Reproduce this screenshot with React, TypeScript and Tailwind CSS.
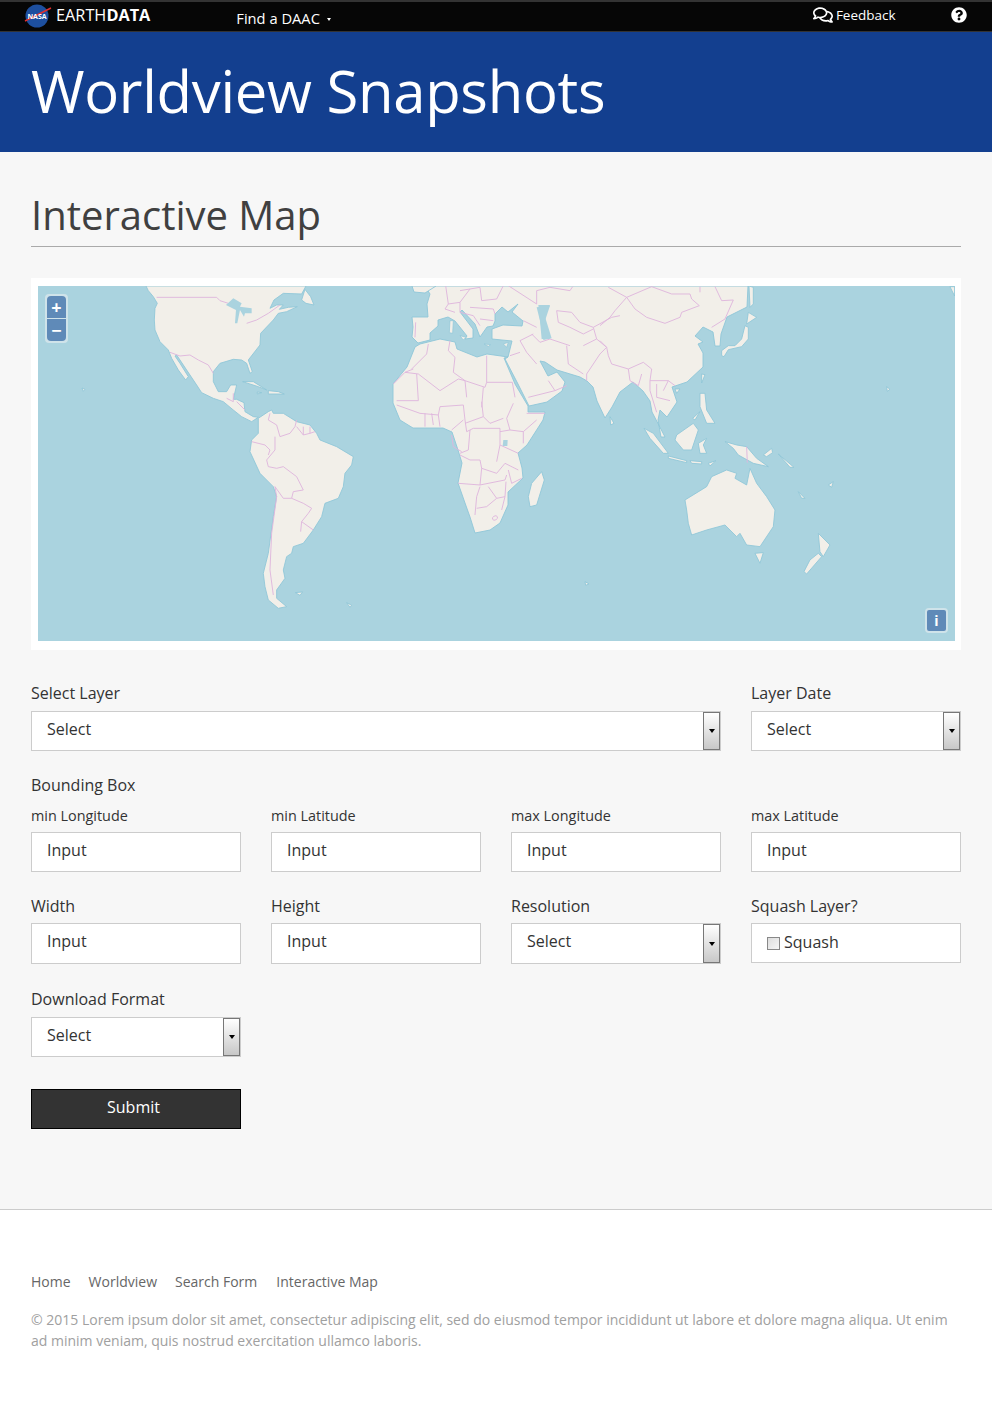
// App.tsx
import React from "react";
import { FaQuestionCircle, FaRegComments } from "react-icons/fa";

const LAND = "#f2efe9";
const COAST = "#8ec6d8";
const BORDER = "#dfb6dd";
const WATER = "#aad3df";

// page coordinates
const eurasia =
  "M425,286 430,294 427,304 428,317 412,317 413,327 412,337 418,343 430,340 430,333 438,326 438,320 448,317 455,321 467,336 465,339 473,338 473,329 460,312 462,310 475,324 480,337 487,327 493,326 495,321 495,314 502,307 508,312 518,304 512,312 523,321 522,326 503,325 492,329 492,339 512,341 508,357 505,359 518,384 529,406 547,402 562,391 565,382 557,372 548,376 540,361 545,362 557,370 580,377 587,381 593,387 597,401 605,418 612,407 620,392 633,382 643,391 650,401 652,412 665,437 661,437 658,420 660,410 667,417 677,402 672,387 687,382 703,367 703,353 698,344 703,342 695,336 703,327 713,332 715,346 720,346 721,334 727,317 747,307 748,286Z";
const africa =
  "M420,344 440,339 455,342 457,349 477,357 487,354 508,357 504,358 515,384 528,406 528,412 545,412 543,420 527,445 518,453 522,468 523,478 508,492 508,505 500,523 490,530 475,533 470,517 465,503 458,483 462,463 458,450 452,432 443,428 413,428 400,420 393,403 393,384 407,367 415,347Z";

const z3Land = [
  "378,48 385,62 400,80 412,100 405,115 403,150 405,180 420,215 445,240 455,265 475,300 497,330 505,320 480,280 465,258 470,255 500,300 530,345 545,368 580,385 610,395 640,420 665,440 695,455 715,442 700,440 675,425 672,398 650,388 640,388 650,345 632,345 620,365 595,365 580,335 580,305 600,280 640,268 665,270 680,280 690,310 697,305 685,270 720,225 722,190 760,150 775,130 800,125 832,110 805,112 778,118 790,105 770,105 750,115 762,90 790,70 845,72 858,48",
  "855,58 872,80 882,105 858,100 845,90",
  "715,445 745,425 755,420 760,430 790,430 830,455 870,465 890,490 900,510 950,530 1000,560 995,585 975,610 970,650 955,685 915,700 905,740 880,780 850,820 820,830 815,850 800,860 790,900 795,925 770,960 770,985 800,1010 775,1015 745,990 735,950 730,910 745,850 760,740 770,680 760,650 720,610 690,545 695,510 715,490",
  "668,335 700,335 740,360 715,350",
  "745,362 775,365 793,372 745,372",
  "712,366 725,368 712,372",
  "826,968 848,966 840,976",
  "980,998 995,1006 990,1012",
  "186,354 195,358 190,364",
];

const z3Borders = [
  "M410,82 L590,82 600,92 625,100",
  "M680,160 710,150 745,130 780,105",
  "M450,247 480,258 510,255 535,270 565,285 580,310",
  "M620,385 640,395 640,370",
  "M650,395 675,420",
  "M750,430 745,450 770,465 780,500 810,490 825,470 830,450",
  "M830,470 850,495 870,490 885,485",
  "M850,470 850,495 M870,470 870,490",
  "M695,515 735,525 750,540 745,555",
  "M765,500 765,540 740,570 745,590 770,595",
  "M770,595 790,590 830,620 850,660 820,665 815,685 850,700 875,715 865,730 845,755 842,785",
  "M765,650 770,680 755,790 750,900 760,975",
  "M765,650 790,685 815,685",
  "M845,755 880,780",
];

const z4Land = [
  "630,370 645,370 650,420 675,460 650,460 630,410",
  "360,440 372,460 362,465",
  "462,475 490,490 535,550 520,550 480,505",
  "535,558 590,572 590,578 535,565",
  "600,572 635,575 635,582 605,580",
  "655,580 678,572 660,588",
  "610,460 625,480 605,540 580,540 555,510 560,495",
  "625,520 650,505 640,525 650,550 630,550",
  "705,515 740,525 770,530 800,565 835,590 790,580 745,555 730,535",
  "820,555 845,535 848,548 830,560",
  "865,552 912,592 900,592",
  "585,690 650,650 665,620 710,600 740,610 735,625 770,645 780,595 800,640 830,680 855,720 850,770 810,830 770,825 750,790 740,800 705,765 650,780 605,795 595,760 590,720",
  "795,850 820,848 810,880",
  "985,790 1020,825 1000,860 990,845",
  "985,850 995,860 950,912 942,905 960,870",
  "925,665 945,685 935,685",
  "1015,645 1030,635 1025,652",
  "1190,350 1200,358 1192,364",
  "285,935 297,942 287,946",
  "1380,50 1394,50 1394,78",
  "608,445 630,425 615,450",
];

const z7Borders = [
  "M107,115 105,160",
  "M197,5 205,60 195,75 225,85",
  "M240,20 300,10 305,50",
  "M205,60 240,55 270,15",
  "M240,55 240,85 280,95 300,125",
  "M270,70 340,75 345,90",
  "M305,50 350,45 370,5",
  "M300,105 340,110",
  "M385,5 470,60 470,20 510,10 570,20 578,8",
  "M430,110 470,130",
  "M530,80 575,85 600,115 640,130 695,100 720,95",
  "M530,80 535,115 570,130 610,150 640,135",
  "M640,130 650,165",
  "M455,150 480,175 510,165 570,185",
  "M560,185 565,240 610,270",
  "M610,185 650,165 680,190 660,210 620,270 620,290",
  "M420,170 460,150",
  "M420,170 440,205 470,240",
  "M390,215 420,205",
  "M445,340 525,320 560,305",
  "M525,320 505,290",
  "M40,300 75,265 100,255",
  "M75,265 115,270 180,320 235,285 255,290 260,340",
  "M110,270 115,350 50,350",
  "M145,180 140,210 95,255",
  "M210,170 205,200 225,220 220,265 255,290",
  "M320,215 320,295 397,295",
  "M255,290 315,310 320,295",
  "M310,310 305,370",
  "M397,295 405,340",
];

const z8Borders = [
  "M50,15 120,40 175,45 180,20 250,15 255,60",
  "M135,40 135,80 M155,40 160,75 M175,45 180,80",
  "M250,60 215,90",
  "M255,60 260,95",
  "M255,70 310,50 330,70 370,55",
  "M305,5 310,50",
  "M400,10 380,55 390,90 430,95 470,60",
  "M430,95 430,130",
  "M495,40 440,40",
  "M260,95 280,85 360,85 360,135 350,185",
  "M270,90 265,150 240,160",
  "M215,105 220,140 245,155",
  "M360,95 390,90",
  "M360,135 415,160",
  "M240,165 270,180 300,180 305,205 350,220 375,190 415,210",
  "M305,205 300,255 235,250",
  "M300,255 375,240 380,225",
  "M385,210 395,250 425,235",
  "M300,260 290,290 285,345",
  "M325,260 350,295 320,320 290,325",
  "M350,295 375,290 378,245",
  "M375,290 365,330",
  "M338,358 a8,6 -30 1,0 14,-8 a8,6 -30 1,0 -14,8",
];

const z9Land = [
  "365,200 385,185 405,185 425,165 435,125 445,130 445,165 425,188 385,197 372,218 365,215",
  "445,85 470,100 440,120",
  "447,6 460,10 460,60 450,70",
  "305,270 315,272 305,297",
  "225,315 240,315 230,328",
];

const z9Borders = [
  "M25,10 80,40 155,8",
  "M80,40 45,80 30,100 0,125",
  "M80,40 105,75 140,100 195,118 240,100 245,85 298,65 275,45 270,30 215,30 155,8",
  "M300,8 300,25 M345,8 365,50 400,48 375,105 335,130",
  "M0,170 20,190 25,215 35,240 85,255 130,235 155,255 150,290 205,290 225,305",
  "M85,255 90,290 115,305 125,270",
  "M150,290 150,320 170,385",
  "M170,300 170,340 210,350",
  "M205,290 190,320",
];

function Lines({ items, width }: { items: string[]; width: number }) {
  return (
    <g fill="none" stroke={BORDER} strokeWidth={width} strokeLinejoin="round">
      {items.map((d, i) => (
        <path key={i} d={d} />
      ))}
    </g>
  );
}

function Shapes({ items, width }: { items: string[]; width: number }) {
  return (
    <g fill={LAND} stroke={COAST} strokeWidth={width} strokeLinejoin="round">
      {items.map((p, i) => (
        <polygon key={i} points={p} />
      ))}
    </g>
  );
}

function WorldMap() {
  return (
    <svg viewBox="38 286 917 355" className="block w-full h-full blur-[0.3px]">
      <rect x="38" y="286" width="917" height="355" fill={WATER} />
      <path d={eurasia} fill={LAND} stroke={COAST} strokeWidth="0.9" strokeLinejoin="round" />
      <path d={africa} fill={LAND} stroke={COAST} strokeWidth="0.9" strokeLinejoin="round" />
      <polygon points="412,286 436,286 425,293 414,292" fill={LAND} stroke={COAST} strokeWidth="0.9" />
      <g transform="translate(20 270) scale(0.3333)">
        <Shapes items={z3Land} width={2.6} />
        <Lines items={z3Borders} width={2.8} />
        <polygon points="618,105 640,85 665,100 660,110 695,115 695,130 675,130 672,140 660,120 652,160 645,160 648,120" fill={WATER} />
      </g>
      <g transform="translate(490 270) scale(0.3333)">
        <Shapes items={z4Land} width={2.6} />
        <line x1="770" y1="530" x2="772" y2="578" stroke={BORDER} strokeWidth="2.8" />
        <polygon points="145,105 180,105 165,140 185,205 160,210 150,150" fill={WATER} />
      </g>
      <g transform="translate(380 284) scale(0.3333)">
        <Lines items={z7Borders} width={2.8} />
        <polygon points="470,70 510,65 495,110 510,165 485,165 480,110" fill={WATER} />
        <g fill={LAND} stroke={COAST} strokeWidth="2">
          <polygon points="210,110 220,110 218,148 208,146" />
          <polygon points="240,155 258,160 250,168" />
          <polygon points="312,180 332,182 325,187" />
          <polygon points="370,180 385,175 380,190" />
        </g>
      </g>
      <g transform="translate(380 400) scale(0.3333)">
        <Lines items={z8Borders} width={2.8} />
        <polygon points="370,120 383,120 382,138 368,138" fill={WATER} />
        <Shapes items={["485,215 493,240 470,315 450,320 445,290 455,250"]} width={2.6} />
      </g>
      <g transform="translate(600 284) scale(0.3333)">
        <Lines items={z9Borders} width={2.8} />
        <Shapes items={z9Land} width={2.6} />
      </g>
    </svg>
  );
}

function Label({ children }: { children: React.ReactNode }) {
  return <div className="text-base leading-[22px] text-[#333]">{children}</div>;
}

function Input() {
  return (
    <div className="h-10 bg-white border border-[#ccc] pl-[15px] pb-[5px] flex items-center text-base text-[#333]">
      Input
    </div>
  );
}

function Select({ tall }: { tall?: boolean }) {
  return (
    <div className={`${tall ? "h-[41px]" : "h-10"} bg-white border border-[#ccc] pl-[15px] flex items-center justify-between text-base text-[#333]`}>
      <span className="pb-[5px]">Select</span>
      <span className="h-full w-[17px] border border-[#777] bg-gradient-to-b from-white to-[#c8c8c8] flex items-center justify-center">
        <span className="w-0 h-0 border-x-[3.5px] border-x-transparent border-t-[4px] border-t-black" />
      </span>
    </div>
  );
}

const App: React.FC = () => {
  return (
    <div className="w-[992px] h-[1416px] bg-white font-['Open_Sans',sans-serif] overflow-hidden">
      {/* Top bar */}
      <div className="h-[32px] bg-[#060606] border-t-2 border-t-[#333] border-b border-b-[#333] flex items-center text-white relative">
        <svg viewBox="0 0 30 26" className="ml-[23px] w-[30px] h-[26px] -mt-[2px]">
          <circle cx="14" cy="13" r="11.5" fill="#1d4f9f" />
          <path d="M2 18 28 5" stroke="#e03030" strokeWidth="1.4" />
          <text x="14" y="15.5" textAnchor="middle" fontSize="7" fontWeight="700" fill="#fff" fontFamily="Open Sans">
            NASA
          </text>
        </svg>
        <span className="ml-[3px] text-[16.3px] -mt-[3px]">
          EARTH<b>DATA</b>
        </span>
        <span className="ml-[86px] text-[14.7px] mt-[3px]">Find a DAAC</span>
        <span className="ml-[7px] mt-[5px] w-0 h-0 border-x-[2px] border-x-transparent border-t-[3px] border-t-white" />
        <FaRegComments className="ml-[482px] -mt-[3px] text-[20px]" />
        <span className="ml-[3px] text-[13.5px] -mt-[2px]">Feedback</span>
        <FaQuestionCircle className="ml-[55px] -mt-[3px] text-[16px]" />
      </div>

      {/* Blue banner */}
      <div className="h-[120px] bg-[#133f8f] flex items-center pl-[31px]">
        <h1 className="text-[58px] leading-none text-white tracking-[-0.3px] -mt-[2px] whitespace-nowrap">Worldview Snapshots</h1>
      </div>

      <div className="bg-[#f7f7f7] h-[1058px] px-[31px] border-b border-b-[#ccc]">
        <h2 className="text-[40px] leading-[52px] text-[#404040] pt-[37px] h-[95px] border-b border-b-[#aaa] w-[930px]">
          Interactive Map
        </h2>

        {/* Map */}
        <div className="mt-[31px] h-[372px] bg-white pl-[7px] pr-[6px] pt-2 pb-[9px]">
          <div className="relative h-full">
            <WorldMap />
            <div className="absolute left-[7px] top-2 w-[23px] h-[49px] rounded border-2 border-[#cfe3ea] bg-[#cfe3ea] flex flex-col gap-px">
              <div className="flex-1 rounded-t-sm bg-[#5f8ab8] flex items-center justify-center text-white text-lg font-bold leading-none">+</div>
              <div className="flex-1 rounded-b-sm bg-[#5f8ab8] flex items-center justify-center text-white text-lg font-bold leading-none">−</div>
            </div>
            <div className="absolute right-[7px] bottom-[8px] w-[23px] h-[25px] rounded border-2 border-[#cfe3ea] bg-[#5f8ab8] flex items-center justify-center text-white text-sm font-bold leading-none">
              i
            </div>
          </div>
        </div>

        {/* Form */}
        <div className="grid grid-cols-4 gap-x-[30px] mt-[32px]">
          <div className="col-span-3">
            <Label>Select Layer</Label>
            <div className="mt-[7px]"><Select /></div>
          </div>
          <div>
            <Label>Layer Date</Label>
            <div className="mt-[7px]"><Select /></div>
          </div>
        </div>

        <div className="mt-[23px]"><Label>Bounding Box</Label></div>
        <div className="grid grid-cols-4 gap-x-[30px] mt-[10px]">
          {["min Longitude", "min Latitude", "max Longitude", "max Latitude"].map((t) => (
            <div key={t}>
              <div className="text-[14.4px] leading-5 text-[#333]">{t}</div>
              <div className="mt-[6px]"><Input /></div>
            </div>
          ))}
        </div>

        <div className="grid grid-cols-4 gap-x-[30px] mt-[23px]">
          <div>
            <Label>Width</Label>
            <div className="mt-[6px] [&>div]:h-[41px]"><Input /></div>
          </div>
          <div>
            <Label>Height</Label>
            <div className="mt-[6px] [&>div]:h-[41px]"><Input /></div>
          </div>
          <div>
            <Label>Resolution</Label>
            <div className="mt-[6px]"><Select tall /></div>
          </div>
          <div>
            <Label>Squash Layer?</Label>
            <div className="mt-[6px] h-10 bg-white border border-[#ccc] pl-[15px] flex items-center gap-[4px] text-base text-[#333]">
              <span className="w-[13px] h-[13px] border border-[#888] bg-gradient-to-br from-[#ddd] to-[#f5f5f5]" />
              <span className="pb-[2px]">Squash</span>
            </div>
          </div>
        </div>

        <div className="mt-[24px]"><Label>Download Format</Label></div>
        <div className="mt-[7px] w-[210px]"><Select /></div>

        <button className="mt-[32px] w-[210px] h-10 bg-[#333] border border-black text-white text-base pr-[5px] pb-[4px]">Submit</button>
      </div>

      {/* Footer */}
      <div className="px-[31px] pt-[62px]">
        <div className="flex text-sm leading-5 text-[#666]">
          <span>Home</span>
          <span className="ml-[18px]">Worldview</span>
          <span className="ml-[18px]">Search Form</span>
          <span className="ml-[19px]">Interactive Map</span>
        </div>
        <p className="mt-[17px] text-sm leading-[21px] text-[#a0a0a0] w-[930px]">
          © 2015 Lorem ipsum dolor sit amet, consectetur adipiscing elit, sed do eiusmod tempor incididunt ut labore et dolore magna aliqua. Ut enim ad minim veniam, quis nostrud exercitation ullamco laboris.
        </p>
      </div>
    </div>
  );
};

export default App;
